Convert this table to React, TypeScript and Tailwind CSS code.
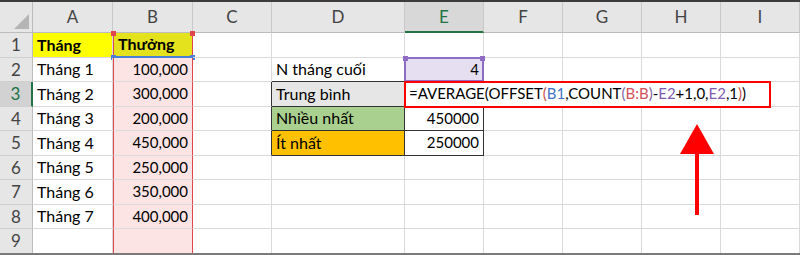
import React from 'react';

type Cell = {
  text?: React.ReactNode;
  cls?: string;
};

const COLS = ['A', 'B', 'C', 'D', 'E', 'F', 'G', 'H', 'I'];

const grid = 'border-[#dadada]';
const listBorder = 'border-[#a6a6a6]';

// formula with Excel's reference colouring
const Formula = () => (
  <span>
    =AVERAGE(OFFSET<span className="text-[#c0504d]">(</span>
    <span className="text-[#4472c4]">B1</span>,COUNT
    <span className="text-[#8064a2]">(</span>
    <span className="text-[#d2515b]">B:B</span>
    <span className="text-[#8064a2]">)</span>-
    <span className="text-[#7e5cb0]">E2</span>+1,0,
    <span className="text-[#7e5cb0]">E2</span>,1
    <span className="text-[#c0504d]">)</span>)
  </span>
);

const bCell = (text?: string): Cell => ({
  text,
  cls: `justify-end pr-1 bg-[#fce4e4] border-b ${listBorder} border-x border-x-[#e0474c]`,
});

const aCell = (text?: string): Cell => ({
  text,
  cls: `pl-1 text-[16px] border-b ${listBorder}`,
});

const blank: Cell = {};

const rows: Cell[][] = [
  [
    { text: 'Tháng', cls: `pl-1 text-[16px] font-bold bg-[#ffff00] border-b ${listBorder}` },
    {
      text: 'Thưởng',
      cls: 'pl-1 text-[16px] font-bold bg-[#e4e21c] border-x border-x-[#e0474c] border-b-2 border-b-[#4a7fd6]',
    },
    blank,
    blank,
    blank,
    blank,
    blank,
    blank,
    blank,
  ],
  [
    aCell('Tháng 1'),
    bCell('100,000'),
    blank,
    { text: 'N tháng cuối', cls: 'pl-1 text-[16px] border-b border-b-[#333]' },
    { text: '4', cls: 'justify-end pr-1 bg-[#e5dff1] border-b border-b-[#333]' },
    blank,
    blank,
    blank,
    blank,
  ],
  [
    aCell('Tháng 2'),
    bCell('300,000'),
    { cls: 'border-r-[#333]' },
    { text: 'Trung bình', cls: 'pl-1 text-[16px] bg-[#e7e6e6] border-b border-b-[#333] border-r-[#333]' },
    { text: <Formula />, cls: 'pl-1 z-10 overflow-visible whitespace-nowrap border-r-0' },
    { cls: 'border-r-0' },
    { cls: 'border-r-0' },
    { cls: 'border-r-0' },
    blank,
  ],
  [
    aCell('Tháng 3'),
    bCell('200,000'),
    { cls: 'border-r-[#333]' },
    { text: 'Nhiều nhất', cls: 'pl-1 text-[16px] bg-[#a9d08e] border-b border-b-[#333] border-r-[#333]' },
    { text: '450000', cls: 'justify-end pr-1 border-b border-b-[#333] border-r-[#333]' },
    blank,
    blank,
    blank,
    blank,
  ],
  [
    aCell('Tháng 4'),
    bCell('450,000'),
    { cls: 'border-r-[#333]' },
    { text: 'Ít nhất', cls: 'pl-1 text-[16px] bg-[#ffc000] border-b border-b-[#333] border-r-[#333]' },
    { text: '250000', cls: 'justify-end pr-1 border-b border-b-[#333] border-r-[#333]' },
    blank,
    blank,
    blank,
    blank,
  ],
  [aCell('Tháng 5'), bCell('250,000'), blank, blank, blank, blank, blank, blank, blank],
  [aCell('Tháng 6'), bCell('350,000'), blank, blank, blank, blank, blank, blank, blank],
  [aCell('Tháng 7'), bCell('400,000'), blank, blank, blank, blank, blank, blank, blank],
  [{ cls: '' }, bCell(), blank, blank, blank, blank, blank, blank, blank],
];

const Handle = ({ cls }: { cls: string }) => (
  <span className={`absolute w-[5px] h-[5px] ${cls}`} />
);

export default function App() {
  return (
    <div className="w-[800px] h-[255px] overflow-hidden bg-white border-t-2 border-t-[#3c3c3c] border-b-2 border-b-[#7a7a7a] relative font-['Lato',sans-serif] text-[15px] text-black">
      <div className="grid grid-cols-[33px_80px_80px_79px_133px_79px_79px_79px_79px_1fr] grid-rows-[31px_repeat(9,24.5px)]">
        {/* corner select-all */}
        <div className="bg-[#e6e6e6] border-r border-b border-[#bcbcbc] flex items-end justify-end p-[3px]">
          <svg width="15" height="15" viewBox="0 0 15 15">
            <polygon points="15,0 15,15 0,15" fill="#b5b5b5" />
          </svg>
        </div>
        {COLS.map((c) => (
          <div
            key={c}
            className={`flex items-center justify-center text-[17px] border-r border-[#c9c9c9] ${
              c === 'E'
                ? 'bg-[#d8d8d8] text-[#217346] border-b-2 border-b-[#217346]'
                : 'bg-[#e6e6e6] text-[#444] border-b border-b-[#bcbcbc]'
            }`}
          >
            {c}
          </div>
        ))}

        {rows.map((row, r) => (
          <React.Fragment key={r}>
            <div
              className={`flex items-center justify-center text-[17px] border-b border-[#cfcfcf] ${
                r === 2
                  ? 'bg-[#d2d2d2] text-[#217346] border-r-2 border-r-[#217346]'
                  : 'bg-[#e6e6e6] text-[#444] border-r border-r-[#bcbcbc]'
              }`}
            >
              {r + 1}
            </div>
            {row.map((cell, c) => (
              <div
                key={c}
                className={`relative flex items-center leading-none border-r border-b ${grid} ${cell.cls ?? ''}`}
              >
                {cell.text}

                {/* column B range handles */}
                {r === 0 && c === 1 && (
                  <>
                    <Handle cls="bg-[#e0474c] -top-[2px] -left-[3px]" />
                    <Handle cls="bg-[#e0474c] -top-[2px] -right-[3px]" />
                    <Handle cls="bg-[#4a7fd6] -bottom-[4px] -left-[3px]" />
                    <Handle cls="bg-[#4a7fd6] -bottom-[4px] -right-[3px]" />
                  </>
                )}

                {/* E2 reference box */}
                {r === 1 && c === 4 && (
                  <span className="absolute -inset-[1px] border-2 border-[#8e6cc4]">
                    <Handle cls="bg-[#8e6cc4] -top-[3px] -left-[3px]" />
                    <Handle cls="bg-[#8e6cc4] -top-[3px] -right-[3px]" />
                  </span>
                )}

                {/* highlight box round the formula */}
                {r === 2 && c === 4 && (
                  <span className="absolute -left-[1px] -top-[1px] w-[367px] h-[27px] border-2 border-[#ff0000]" />
                )}
              </div>
            ))}
          </React.Fragment>
        ))}
      </div>

      {/* arrow pointing up at the formula */}
      <svg className="absolute left-[678px] top-[120px]" width="38" height="95" viewBox="0 0 38 95">
        <polygon points="19,2 36,32 2,32" fill="#ff0000" />
        <rect x="17" y="31" width="4" height="62" fill="#ff0000" />
      </svg>
    </div>
  );
}
